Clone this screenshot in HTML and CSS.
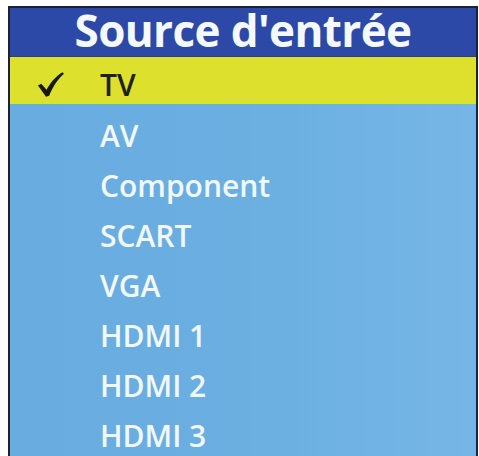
FILE: index.html
```html
<!DOCTYPE html>
<html lang="fr">
<head>
<meta charset="utf-8">
<title>Source d'entrée</title>
<link rel="stylesheet" href="styles.css">
</head>
<body>
<div class="menu">
  <div class="menu-title">Source d'entrée</div>
  <ul class="menu-list">
    <li class="item selected">
      <span class="mark">
        <svg viewBox="0 0 26 26" width="26" height="26" aria-hidden="true">
          <path d="M0 13.6 L3.2 11.8 L8.6 17.8 C12 11 17 5 24.4 0.2 L26 1.8 C20 7.2 15 14 11.2 23.8 L8 24.8 Z" fill="#161a0c"/>
        </svg>
      </span>
      <span class="label">TV</span>
    </li>
    <li class="item"><span class="mark"></span><span class="label">AV</span></li>
    <li class="item"><span class="mark"></span><span class="label">Component</span></li>
    <li class="item"><span class="mark"></span><span class="label">SCART</span></li>
    <li class="item"><span class="mark"></span><span class="label">VGA</span></li>
    <li class="item"><span class="mark"></span><span class="label">HDMI 1</span></li>
    <li class="item"><span class="mark"></span><span class="label">HDMI 2</span></li>
    <li class="item"><span class="mark"></span><span class="label">HDMI 3</span></li>
  </ul>
</div>
</body>
</html>
```
FILE: styles.css
```css
html, body {
  margin: 0;
  padding: 0;
  background: #ffffff;
  overflow: hidden;
  height: 456px;
}

.menu {
  margin: 6px 0 0 8px;
  width: 470px;
  height: 460px;
  box-sizing: border-box;
  border: 2px solid #1c2234;
  border-bottom: none;
  background: linear-gradient(90deg, #68ace0 0%, #6cb0e2 60%, #76b6e6 100%);
  font-family: "Open Sans", "DejaVu Sans", sans-serif;
  font-weight: 600;
}

.menu-title {
  height: 49px;
  box-sizing: border-box;
  padding-bottom: 4px;
  line-height: 45px;
  background: #2d49a8;
  color: #f4f9ff;
  font-size: 44px;
  font-weight: 700;
  letter-spacing: -0.6px;
  text-align: center;
  border-bottom: 1px solid #2a3f86;
}

.menu-list {
  list-style: none;
  margin: 0;
  padding: 0;
}

.item {
  display: flex;
  align-items: center;
  height: 50px;
  box-sizing: border-box;
  padding-top: 14px;
  color: #f2f8ff;
  font-size: 30px;
  line-height: 36px;
}

.item.selected {
  height: 47px;
  padding-top: 10px;
  padding-bottom: 1px;
  background: #dde02c;
  color: #1c2212;
}

.mark {
  display: flex;
  width: 26px;
  height: 26px;
  margin-left: 28px;
  margin-right: 36px;
}

.label {
  display: block;
}
```
